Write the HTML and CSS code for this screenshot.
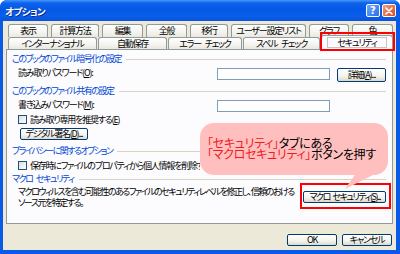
FILE: index.html
```html
<!DOCTYPE html>
<html lang="ja">
<head>
  <meta charset="UTF-8" />
  <title>オプション</title>
  <link rel="stylesheet" href="styles.css">
</head>
<body>
  <div class="window">
    <div class="titlebar">
      <span class="title">オプション</span>
      <span class="cbtn help">?</span>
      <span class="cbtn close">
        <svg width="8" height="8" viewBox="0 0 8 8"><path d="M1 1 L7 7 M7 1 L1 7" stroke="#fff" stroke-width="1.6" stroke-linecap="round"/></svg>
      </span>
    </div>

    <div class="client">
      <div class="tabs">
        <div class="tab-row row1">
          <div class="tab">表示</div>
          <div class="tab">計算方法</div>
          <div class="tab">編集</div>
          <div class="tab">全般</div>
          <div class="tab">移行</div>
          <div class="tab">ユーザー設定リスト</div>
          <div class="tab">グラフ</div>
          <div class="tab">色</div>
        </div>
        <div class="tab-row row2">
          <div class="tab">インターナショナル</div>
          <div class="tab">自動保存</div>
          <div class="tab">エラー チェック</div>
          <div class="tab">スペル チェック</div>
          <div class="tab active"><span>セキュリティ</span></div>
        </div>
      </div>

      <div class="panel">
        <div class="group-head">このブックのファイル暗号化の設定</div>
        <div class="field">
          <label>読み取りパスワード(<u>O</u>):</label>
          <span class="textbox"></span>
          <button class="btn detail">詳細(<u>A</u>)...</button>
        </div>

        <div class="group-head gap">このブックのファイル共有の設定</div>
        <div class="field">
          <label>書き込みパスワード(<u>M</u>):</label>
          <span class="textbox"></span>
        </div>
        <div class="check tight">
          <span class="checkbox"></span>
          <span>読み取り専用を推奨する(<u>E</u>)</span>
        </div>
        <button class="btn sign">デジタル署名(<u>D</u>)...</button>

        <div class="group-head wide">プライバシーに関するオプション</div>
        <div class="check">
          <span class="checkbox"></span>
          <span class="clip">保存時にファイルのプロパティから個人情報を削除する(<u>R</u>)</span>
        </div>

        <div class="group-head">マクロ セキュリティ</div>
        <div class="macro">
          <p class="desc">マクロウィルスを含む可能性のあるファイルのセキュリティレベルを修正し、信頼のおける<br>ソース元を特定する。</p>
          <button class="btn macro-btn">マクロ セキュリティ(<u>S</u>)...</button>
        </div>
      </div>

      <div class="footer">
        <button class="btn dlg">OK</button>
        <button class="btn dlg">キャンセル</button>
      </div>
    </div>

    <!-- 注釈 -->
    <div class="mark mark-tab"></div>
    <div class="mark mark-btn"></div>
    <div class="callout">
      <span class="red">「セキュリティ」</span>タブにある<br>
      <span class="red">「マクロセキュリティ」</span>ボタンを押す
    </div>
  </div>
</body>
</html>
```

FILE: styles.css
```css
* {
  box-sizing: border-box;
}
body {
  margin: 0;
  background: #fff;
  color: #000;
  font-family: "Noto Sans CJK JP", sans-serif;
  font-size: 9px;
  letter-spacing: -1.2px;
  word-spacing: 3px;
  font-feature-settings: "palt";
}
.window {
  position: relative;
  width: 400px;
  height: 254px;
  display: flex;
  flex-direction: column;
  overflow: hidden;
  background: #0a5ae8;
  border-radius: 7px 7px 0 0;
}
.titlebar {
  height: 21px;
  flex: none;
  display: flex;
  align-items: center;
  padding: 0 4px 0 5px;
  background: linear-gradient(#4a96fb 0, #0c63ec 3px, #0558e6 9px, #0a5fe9 16px, #0752de 21px);
}
.title {
  flex: 1;
  color: #fff;
  font-weight: bold;
  font-size: 9.5px;
  letter-spacing: -0.6px;
  text-shadow: 1px 1px 0 #0b2a8c;
}
.cbtn {
  width: 14px;
  height: 13px;
  border: 1px solid #fff;
  border-radius: 2px;
  display: flex;
  align-items: center;
  justify-content: center;
  color: #fff;
}
.help {
  background: linear-gradient(135deg, #6ea6ff, #2b6de6);
  font-family: "DejaVu Sans", sans-serif;
  font-weight: bold;
  font-size: 10px;
  letter-spacing: 0;
}
.close {
  margin-left: 2px;
  background: linear-gradient(135deg, #f0a07e, #d9481f);
}
.client {
  flex: 1;
  display: flex;
  flex-direction: column;
  margin: 0 4px 4px 3px;
  padding-top: 3px;
  background: #ece9d8;
}

/* タブ */
.tabs {
  margin: 0 3px;
  padding-left: 2px;
  position: relative;
  z-index: 1;
}
.tab-row {
  display: flex;
}
.row1 {
  gap: 3px;
  height: 13px;
}
.row2 {
  gap: 1px;
  height: 12px;
}
.tab {
  flex: none;
  border: 1px solid #919b9c;
  border-bottom: none;
  border-radius: 3px 3px 0 0;
  background: linear-gradient(#fff, #f4f3ee 60%, #e8e7e0);
  text-align: center;
  line-height: 11px;
  white-space: nowrap;
}
.row1 .tab:nth-child(1) { width: 40px; }
.row1 .tab:nth-child(2) { width: 48px; }
.row1 .tab:nth-child(3) { width: 41px; }
.row1 .tab:nth-child(4) { width: 41px; }
.row1 .tab:nth-child(5) { width: 38px; }
.row1 .tab:nth-child(6) { width: 75px; }
.row1 .tab:nth-child(7) { width: 40px; }
.row1 .tab:nth-child(8) { width: 41px; }
.row2 .tab:nth-child(1) { width: 89px; }
.row2 .tab:nth-child(2) { width: 69px; }
.row2 .tab:nth-child(3) { width: 74px; }
.row2 .tab:nth-child(4) { width: 77px; }
.tab.active {
  width: 72px;
  height: 15px;
  margin-top: -2px;
  background: #fcfcfe;
}
.tab.active span {
  display: block;
  margin: 1px 5px 0;
  border: 1px solid #c4c4c4;
  line-height: 9px;
}

/* パネル */
.panel {
  flex: none;
  height: 175px;
  margin: 0 3px;
  padding: 4px 6px 0 5px;
  border: 1px solid #919b9c;
  background: #fcfcfe;
}
.group-head {
  display: flex;
  align-items: center;
  gap: 5px;
  height: 10px;
  line-height: 10px;
  letter-spacing: -1.5px;
  color: #0046d5;
  white-space: nowrap;
}
.group-head::after {
  content: "";
  flex: 1;
  border-top: 1px solid #d6d3c4;
}
.group-head.gap {
  margin-top: 4px;
}
.group-head.wide {
  margin-top: 6px;
}
.field {
  display: flex;
  align-items: flex-start;
  margin-left: 6px;
  margin-top: 4px;
}
.field label {
  width: 199px;
  line-height: 10px;
}
.textbox {
  width: 113px;
  height: 12px;
  border: 1px solid #7f9db9;
  background: #fff;
}
.btn {
  font: inherit;
  letter-spacing: inherit;
  word-spacing: inherit;
  font-feature-settings: "palt";
  height: 12px;
  padding: 0;
  border: 1px solid #003c74;
  border-radius: 2px;
  background: linear-gradient(#fff, #f3f3ee 60%, #dcd8cc);
  line-height: 10px;
  color: #000;
  white-space: nowrap;
}
.detail {
  width: 49px;
  height: 14px;
  margin-left: 7px;
}
.check {
  display: flex;
  align-items: center;
  gap: 3px;
  height: 10px;
  margin: 4px 0 0 6px;
  white-space: nowrap;
}
.check.tight {
  margin-top: 2px;
}
.checkbox {
  width: 9px;
  height: 9px;
  flex: none;
  border: 1px solid #1c5180;
  background: linear-gradient(135deg, #dcdcd7, #fff);
}
.clip {
  max-width: 170px;
  overflow: hidden;
}
.sign {
  display: block;
  width: 68px;
  margin: 4px 0 0 8px;
}
.check + .group-head {
  margin-top: 4px;
}
.macro {
  display: flex;
  align-items: center;
  margin: 2px 0 0 6px;
}
.desc {
  width: 285px;
  margin: 0;
  line-height: 11px;
  letter-spacing: -1.5px;
  white-space: nowrap;
}
.macro-btn {
  width: 83px;
  margin-left: 2px;
  letter-spacing: -1.5px;
  word-spacing: 2px;
}

/* 下部ボタン */
.footer {
  display: flex;
  justify-content: flex-end;
  gap: 5px;
  margin-top: 10px;
  padding-right: 4px;
}
.dlg {
  width: 50px;
}

/* 注釈 */
.mark {
  position: absolute;
  border: 2px solid #f00;
  z-index: 3;
}
.mark-tab {
  left: 320px;
  top: 32px;
  width: 75px;
  height: 19px;
}
.mark-btn {
  left: 300px;
  top: 183px;
  width: 91px;
  height: 26px;
}
.callout {
  position: absolute;
  left: 200px;
  top: 123px;
  width: 188px;
  height: 52px;
  padding: 14px 0 0 7px;
  border-radius: 14px;
  background: #ffbfbf;
  font-size: 12px;
  letter-spacing: -0.3px;
  word-spacing: 0;
  line-height: 11px;
  white-space: nowrap;
  z-index: 4;
}
.callout::after {
  content: "";
  position: absolute;
  left: 145px;
  top: 51px;
  width: 30px;
  height: 15px;
  background: #ffbfbf;
  clip-path: polygon(35% 0, 100% 0, 0 100%);
}
.red {
  color: #f01c1c;
}
```
